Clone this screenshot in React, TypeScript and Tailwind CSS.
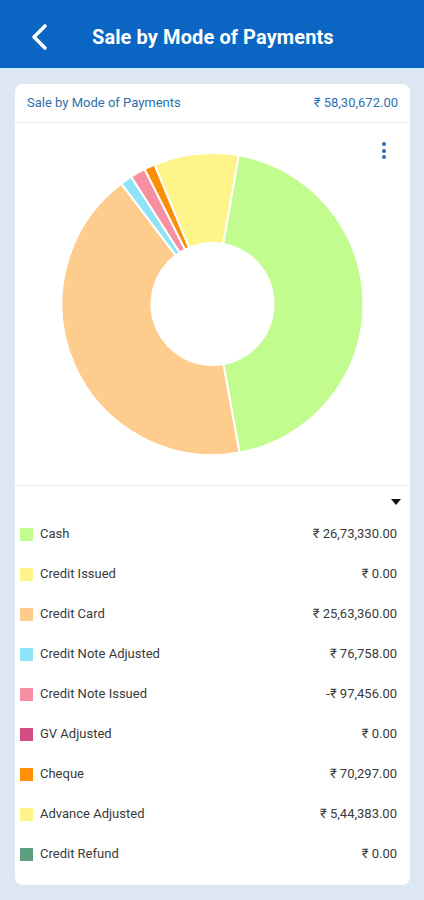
import React from "react";

type Item = { label: string; value: number; color: string; text: string };

const items: Item[] = [
  { label: "Cash", value: 2673330, color: "#c2fc8e", text: "₹ 26,73,330.00" },
  { label: "Credit Issued", value: 0, color: "#fff48a", text: "₹ 0.00" },
  { label: "Credit Card", value: 2563360, color: "#fecd8e", text: "₹ 25,63,360.00" },
  { label: "Credit Note Adjusted", value: 76758, color: "#8fe3f6", text: "₹ 76,758.00" },
  { label: "Credit Note Issued", value: 97456, color: "#f78fa3", text: "-₹ 97,456.00" },
  { label: "GV Adjusted", value: 0, color: "#d54c84", text: "₹ 0.00" },
  { label: "Cheque", value: 70297, color: "#fb9006", text: "₹ 70,297.00" },
  { label: "Advance Adjusted", value: 544383, color: "#fff48a", text: "₹ 5,44,383.00" },
  { label: "Credit Refund", value: 0, color: "#5d9e7e", text: "₹ 0.00" },
];

function pt(cx: number, cy: number, r: number, deg: number) {
  const a = ((deg - 90) * Math.PI) / 180;
  return [cx + r * Math.cos(a), cy + r * Math.sin(a)];
}

function arc(cx: number, cy: number, ro: number, ri: number, a0: number, a1: number) {
  const [x0, y0] = pt(cx, cy, ro, a0);
  const [x1, y1] = pt(cx, cy, ro, a1);
  const [x2, y2] = pt(cx, cy, ri, a1);
  const [x3, y3] = pt(cx, cy, ri, a0);
  const large = a1 - a0 > 180 ? 1 : 0;
  return `M${x0} ${y0} A${ro} ${ro} 0 ${large} 1 ${x1} ${y1} L${x2} ${y2} A${ri} ${ri} 0 ${large} 0 ${x3} ${y3} Z`;
}

function Donut() {
  const total = items.reduce((s, i) => s + Math.abs(i.value), 0);
  let a = 10;
  const cx = 197.5;
  const cy = 181;
  const paths: React.ReactElement[] = [];
  items.forEach((it, idx) => {
    if (!it.value) return;
    const sweep = (Math.abs(it.value) / total) * 360;
    paths.push(
      <path key={idx} d={arc(cx, cy, 151, 61, a, a + sweep)} fill={it.color} stroke="#ffffff" strokeWidth={2} strokeLinejoin="round" />
    );
    a += sweep;
  });
  return (
    <svg width="395" height="363" viewBox="0 0 395 363" className="block">
      {paths}
    </svg>
  );
}

export default function App() {
  return (
    <div className="w-[424px] h-[900px] bg-[#dde7f1] flex flex-col" style={{ fontFamily: "Roboto, 'Liberation Sans', sans-serif" }}>
      <div className="h-[70px] bg-[#0b65c2] border-b-2 border-[#cdeaf7] flex items-center shrink-0">
        <svg width="20" height="28" viewBox="0 0 20 28" className="ml-[30px] mt-[6px]">
          <path d="M15 3 L4 14 L15 25" fill="none" stroke="#ffffff" strokeWidth="3.6" strokeLinecap="round" strokeLinejoin="round" />
        </svg>
        <div className="ml-[42px] mt-[6px] text-white text-[20px] font-bold tracking-[0.1px]">Sale by Mode of Payments</div>
      </div>
      <div className="mx-[15px] mt-[14px] bg-white rounded-[8px] w-[395px]">
        <div className="h-[39px] flex items-center justify-between px-[12px] border-b border-[#ececec] text-[13px] text-[#2f6fae]">
          <span>Sale by Mode of Payments</span>
          <span>₹ 58,30,672.00</span>
        </div>
        <div className="relative h-[363px] border-b border-[#ececec]">
          <Donut />
          <div className="absolute right-[24px] top-[19px] flex flex-col gap-[2.5px]">
            <span className="block w-[4px] h-[4px] rounded-full bg-[#2d6db0]" />
            <span className="block w-[4px] h-[4px] rounded-full bg-[#2d6db0]" />
            <span className="block w-[4px] h-[4px] rounded-full bg-[#2d6db0]" />
          </div>
        </div>
        <div className="flex justify-end pr-[9px] pt-[13px] h-[28px]">
          <svg width="10" height="6" viewBox="0 0 10 6">
            <path d="M0 0 L10 0 L5 6 Z" fill="#111111" />
          </svg>
        </div>
        <div className="flex flex-col pb-[11px]">
          {items.map((it) => (
            <div key={it.label} className="h-[40px] flex items-center pl-[5px] pr-[13px]">
              <span className="w-[13px] h-[13px] shrink-0" style={{ background: it.color }} />
              <span className="ml-[7px] text-[13px] text-[#3a3a3a]">{it.label}</span>
              <span className="ml-auto text-[13px] text-[#3a3a3a]">{it.text}</span>
            </div>
          ))}
        </div>
      </div>
    </div>
  );
}
